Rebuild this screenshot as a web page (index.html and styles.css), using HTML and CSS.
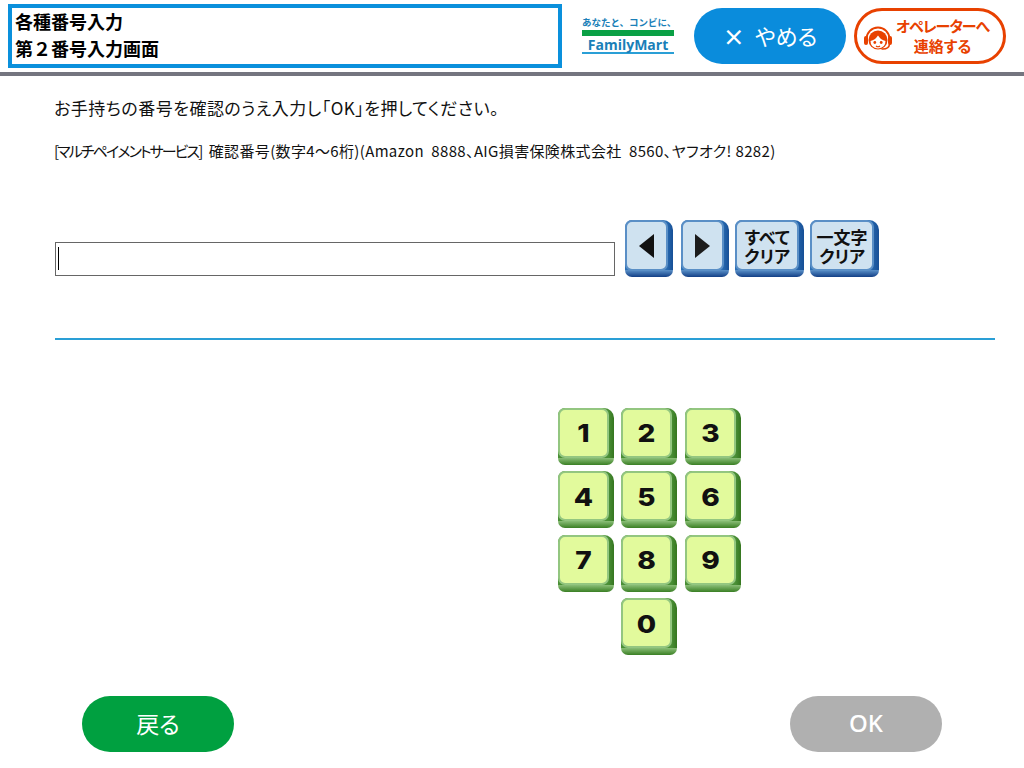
FILE: index.html
```html
<!DOCTYPE html>
<html lang="ja">
<head>
  <meta charset="UTF-8">
  <title>第2番号入力画面</title>
  <link rel="stylesheet" href="styles.css">
</head>
<body>

  <!-- ヘッダー -->
  <header class="cabecera">
    <div class="titulo">
      <div>各種番号入力</div>
      <div>第２番号入力画面</div>
    </div>
    <div class="logo">
      <div class="logo-lema">あなたと、コンビに、</div>
      <div class="logo-barra"></div>
      <div class="logo-nombre">FamilyMart</div>
    </div>
    <button class="pill pill-azul"><span class="cruz">×</span>やめる</button>
    <button class="pill pill-operador">
      <svg class="operador-icono" width="28" height="26" viewBox="0 0 28 26">
        <path d="M2.5 14 A11.5 11.5 0 0 1 25.5 14" fill="none" stroke="#e84100" stroke-width="2"/>
        <rect x="0" y="11" width="4" height="9" rx="2" fill="#e84100"/>
        <rect x="24" y="11" width="4" height="9" rx="2" fill="#e84100"/>
        <circle cx="14" cy="15" r="9.5" fill="#e84100"/>
        <path d="M6.5 16 Q11 15 14 10.5 Q17 15 21.5 16 Q21.5 23 14 23.5 Q6.5 23 6.5 16 Z" fill="#fff"/>
        <circle cx="10.8" cy="17.5" r="1.4" fill="#e84100"/>
        <circle cx="17.2" cy="17.5" r="1.4" fill="#e84100"/>
        <path d="M25.5 19 Q25 24.5 17.5 24" fill="none" stroke="#e84100" stroke-width="1.6"/>
        <path d="M12 21 Q14 22.5 16 21" fill="none" stroke="#e84100" stroke-width="1.2"/>
      </svg>
      <span class="operador-texto"><span class="apretado">オペレーターへ</span><br>連絡する</span>
    </button>
  </header>

  <main class="contenido">
    <p class="aviso">お手持ちの番号を確認のうえ入力し「OK」を押してください。</p>
    <p class="nota"><span class="apretado">[マルチペイメントサービス]</span>&nbsp; 確認番号(数字4～6桁)(Amazon&nbsp; 8888、AIG損害保険株式会社&nbsp; 8560、ヤフオク! 8282)</p>

    <div class="fila-entrada">
      <div class="entrada"><span class="cursor"></span></div>
      <div class="teclas-azules">
        <button class="azul azul-flecha primera"><svg width="15" height="24" viewBox="0 0 15 24"><path d="M15 0V24L0 12Z" fill="#111"/></svg></button>
        <button class="azul azul-flecha"><svg width="15" height="24" viewBox="0 0 15 24"><path d="M0 0V24L15 12Z" fill="#1c1c1c"/></svg></button>
        <button class="azul azul-texto">すべて<br>クリア</button>
        <button class="azul azul-texto">一文字<br>クリア</button>
      </div>
    </div>

    <hr class="linea">

    <div class="teclado">
      <button class="tecla"><span>1</span></button>
      <button class="tecla"><span>2</span></button>
      <button class="tecla"><span>3</span></button>
      <button class="tecla"><span>4</span></button>
      <button class="tecla"><span>5</span></button>
      <button class="tecla"><span>6</span></button>
      <button class="tecla"><span>7</span></button>
      <button class="tecla"><span>8</span></button>
      <button class="tecla"><span>9</span></button>
      <button class="tecla cero"><span>0</span></button>
    </div>
  </main>

  <footer class="pie">
    <button class="pill pill-verde">戻る</button>
    <button class="pill pill-gris">OK</button>
  </footer>

</body>
</html>
```

FILE: styles.css
```css
* {
  box-sizing: border-box;
}

body {
  margin: 0;
  height: 768px;
  overflow: hidden;
  background-color: white;
  color: #111;
  font-family: "Noto Sans CJK JP", "Noto Sans", sans-serif;
  font-feature-settings: "palt";
}

button {
  font-family: inherit;
  font-feature-settings: inherit;
  padding: 0;
  border: none;
}

.cabecera {
  display: flex;
  align-items: center;
  height: 76px;
  padding: 0 18px 0 8px;
  border-bottom: 4px solid #74757f;
}

.titulo {
  width: 554px;
  height: 64px;
  padding-left: 3px;
  border: 4px solid #0a90dc;
  font-size: 18px;
  font-weight: bold;
  font-feature-settings: normal;
  line-height: 27px;
  color: black;
}

.logo {
  width: 92px;
  margin: 0 20px 2px;
  text-align: center;
  color: #1a7fb8;
}

.logo-lema {
  font-size: 9.5px;
  font-weight: bold;
  font-feature-settings: normal;
  line-height: 13px;
  white-space: nowrap;
}

.logo-barra {
  height: 6px;
  margin-top: 1px;
  background-color: #0aa045;
}

.logo-nombre {
  padding-top: 1px;
  border-bottom: 2px solid #2a9fd6;
  font-family: "Open Sans", sans-serif;
  font-size: 14px;
  font-weight: bold;
  line-height: 15px;
}

.pill {
  width: 152px;
  height: 56px;
  padding-bottom: 3px;
  border-radius: 28px;
  color: white;
  font-size: 23px;
}

.pill-azul {
  background-color: #0a8cdc;
  margin-right: 8px;
  font-size: 22px;
}

.cruz {
  margin-right: 10px;
  font-weight: bold;
}

.pill-operador {
  display: flex;
  align-items: center;
  padding: 0 0 0 7px;
  background-color: white;
  border: 3px solid #e84100;
  color: #e84100;
}

.operador-icono {
  flex: none;
  margin-top: 3px;
}

.operador-texto {
  flex: 1;
  padding-right: 10px;
  font-size: 15px;
  font-weight: bold;
  line-height: 20px;
  text-align: center;
  white-space: nowrap;
}

.apretado {
  letter-spacing: -1px;
}

.contenido {
  padding: 0 29px 0 55px;
}

.aviso {
  margin: 19px 0 0 -1px;
  font-size: 17px;
  letter-spacing: 0.5px;
  line-height: 26px;
}

.nota {
  margin: 20px 0 0 -1px;
  font-size: 15px;
  letter-spacing: 0.35px;
  line-height: 20px;
  white-space: nowrap;
}

.nota .apretado {
  letter-spacing: -1.9px;
}

.fila-entrada {
  display: flex;
  align-items: flex-end;
  margin-top: 59px;
}

.entrada {
  width: 560px;
  height: 34px;
  margin-bottom: 1px;
  padding: 4px 2px;
  border: 1px solid #666;
}

.cursor {
  display: block;
  width: 1px;
  height: 23px;
  background-color: black;
}

.teclas-azules {
  display: flex;
  gap: 6px;
  margin-left: 10px;
}

.azul {
  position: relative;
  isolation: isolate;
  height: 57px;
  padding: 0 5px 6px 0;
  border-radius: 7px 10px 7px 7px;
  background:
    linear-gradient(to bottom, transparent 87%, #5f95cc 87%, #123f86),
    linear-gradient(to right, #2b6fb5 85%, #174f96);
  color: #111;
  font-size: 17px;
  font-weight: bold;
  line-height: 19px;
}

.azul::before {
  content: "";
  position: absolute;
  inset: 0 5px 6px 0;
  z-index: -1;
  border: 2px solid #5a8fc6;
  border-radius: 7px;
  background-color: #cfe2f0;
}

.azul svg {
  display: block;
  margin: auto;
}

.azul-flecha {
  width: 48px;
}

.primera {
  margin-right: 2px;
}

.azul-texto {
  width: 69px;
}

.linea {
  height: 2px;
  margin: 61px 0 0 0;
  border: none;
  background-color: #2a9fd6;
}

.teclado {
  display: grid;
  grid-template-columns: repeat(3, 56px);
  grid-auto-rows: 57px;
  gap: 6.5px 7.5px;
  width: fit-content;
  margin: 67.8px 0 0 502.8px;
}

.tecla {
  position: relative;
  isolation: isolate;
  padding: 0 5px 7px 0;
  border-radius: 7px 10px 7px 7px;
  background:
    linear-gradient(to bottom, transparent 87%, #8fc27c 87%, #3a7f24),
    linear-gradient(to right, #4a8f36 90%, #35761f);
  font-family: "Inter", sans-serif;
  font-size: 25px;
  font-weight: 800;
  color: #111;
}

.tecla span {
  display: block;
  padding-top: 1px;
  transform: scaleX(1.12);
}

.tecla::before {
  content: "";
  position: absolute;
  inset: 0 5px 7px 0;
  z-index: -1;
  border: 2px solid #93c680;
  border-radius: 7px;
  background-color: #e2fa9c;
}

.cero {
  grid-column: 2;
}

.pie {
  position: absolute;
  left: 82px;
  top: 696px;
  display: flex;
  justify-content: space-between;
  width: 860px;
}

.pill-verde {
  background-color: #00a040;
}

.pill-gris {
  background-color: #b0b0b0;
  font-family: "Noto Sans", sans-serif;
  font-size: 24px;
  font-weight: 500;
}
```
